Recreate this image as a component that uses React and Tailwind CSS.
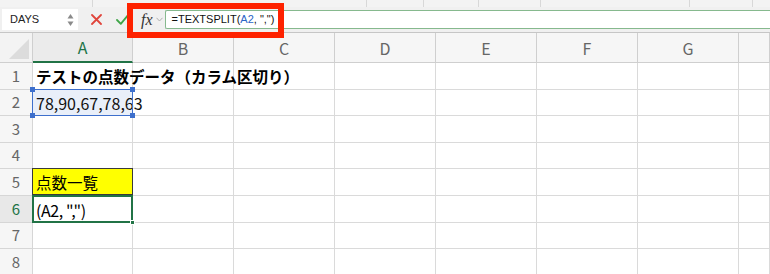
import React from "react";

const font = { fontFamily: '"Noto Sans CJK JP", "Noto Sans", sans-serif' };

const cols = ["A", "B", "C", "D", "E", "F", "G", ""];
const rows = [1, 2, 3, 4, 5, 6, 7, 8];

const Cell = ({ r, c }) => {
  const base = "h-[26.6px] border-r border-b border-[#dadada] flex items-center";
  if (c === "A" && r === 1)
    return (
      <div className={base}>
        <span className="relative z-10 pl-[3px] whitespace-nowrap text-[15.5px] font-bold text-black pt-[1px]">
          テストの点数データ（カラム区切り）
        </span>
      </div>
    );
  if (c === "A" && r === 2)
    return (
      <div className={`${base} relative bg-[#e9eff9]`}>
        <span className="relative z-10 pl-[3px] whitespace-nowrap text-[16px] text-[#111] pt-[2px]">78,90,67,78,63</span>
        <div className="absolute inset-[-1px] z-20 border-[1.5px] border-[#3d6fcc]" />
        <div className="absolute left-[-3px] top-[-3px] z-20 h-[5px] w-[5px] bg-[#3d6fcc]" />
        <div className="absolute right-[-3px] top-[-3px] z-20 h-[5px] w-[5px] bg-[#3d6fcc]" />
        <div className="absolute left-[-3px] bottom-[-3px] z-20 h-[5px] w-[5px] bg-[#3d6fcc]" />
        <div className="absolute right-[-3px] bottom-[-3px] z-20 h-[5px] w-[5px] bg-[#3d6fcc]" />
      </div>
    );
  if (c === "A" && r === 5)
    return (
      <div className={`${base} bg-[#ffff00] !border-[#3a3a3a] border-l border-t ml-[-1px] mt-[-1px]`}>
        <span className="pl-[3px] whitespace-nowrap text-[15.5px] text-black pt-[2px]">点数一覧</span>
      </div>
    );
  if (c === "A" && r === 6)
    return (
      <div className={`${base} relative`}>
        <div className="absolute inset-[-1px] border-2 border-[#217346]" />
        <span className="pl-[3px] whitespace-nowrap text-[16px] tracking-[-0.4px] text-black pt-[2px]">(A2, ",")</span>
        <div className="absolute right-[-3px] bottom-[-3px] h-[5px] w-[5px] bg-[#217346] border border-white" />
      </div>
    );
  return <div className={`${base} bg-white`} />;
};

export default function App() {
  return (
    <div className="relative h-[274px] w-[770px] overflow-hidden bg-white" style={font}>
      {/* ribbon remnant */}
      <div className="flex h-[7px] bg-[#f3f3f3]">
        <div className="w-[93px] border-r border-[#d8d8d8]" />
        <div className="w-[274px] border-r border-[#d8d8d8]" />
        <div className="w-[57px] border-r border-[#d8d8d8]" />
        <div className="w-[55px] border-r border-[#d8d8d8]" />
        <div className="w-[62px] border-r border-[#d8d8d8]" />
        <div className="w-[149px] border-r border-[#d8d8d8]" />
        <div className="w-[63px] border-r border-[#d8d8d8]" />
      </div>

      {/* formula bar */}
      <div className="flex h-[26px] items-center bg-[#f0f0f0] border-b border-[#c6c6c6]">
        <div className="ml-[2px] flex h-[21px] w-[76px] items-center justify-between bg-white pl-[8px] pr-[4px]">
          <span className="text-[11px] text-[#222]" style={{ fontFamily: '"Liberation Sans", sans-serif' }}>DAYS</span>
          <svg width="7" height="14" viewBox="0 0 7 14">
            <path d="M3.5 1 L6.5 5.5 H0.5 Z" fill="#8a8a8a" />
            <path d="M3.5 13 L6.5 8.5 H0.5 Z" fill="#8a8a8a" />
          </svg>
        </div>
        <svg className="ml-[13px]" width="11" height="11" viewBox="0 0 11 11">
          <path d="M1 1 L10 10 M10 1 L1 10" stroke="#e0453c" strokeWidth="1.8" strokeLinecap="round" />
        </svg>
        <svg className="ml-[14px]" width="13" height="11" viewBox="0 0 13 11">
          <path d="M1 6 L4.8 9.8 L12 1.2" stroke="#3fa548" strokeWidth="1.8" fill="none" strokeLinecap="round" strokeLinejoin="round" />
        </svg>
        <span className="ml-[12px] text-[16px] italic text-[#333]" style={{ fontFamily: '"Liberation Serif", serif' }}>
          fx
        </span>
        <svg className="ml-[3px]" width="7" height="5" viewBox="0 0 7 5">
          <path d="M0.5 0.8 L3.5 4 L6.5 0.8" stroke="#b0b0b0" strokeWidth="1" fill="none" />
        </svg>
        <div className="ml-[2px] flex h-[19px] flex-1 items-center rounded-l-[2px] border-y border-l border-[#86b98e] bg-white pl-[6px]">
          <span className="text-[11px] text-[#111]" style={{ fontFamily: '"Liberation Sans", sans-serif' }}>
            =TEXTSPLIT(<span className="text-[#2a64c6]">A2</span>, ",")
          </span>
        </div>
      </div>

      {/* grid */}
      <div className="grid grid-cols-[33px_100px_101px_101px_101px_101px_101px_101px_1fr]">
        <div className="relative h-[30px] border-r border-b border-[#cfcfcf] bg-[#f3f3f3]">
          <svg className="absolute bottom-[3px] right-[3px]" width="20" height="20" viewBox="0 0 20 20">
            <path d="M20 0 V20 H0 Z" fill="#dcdcdc" />
          </svg>
        </div>
        {cols.map((c) => (
          <div
            key={c || "h"}
            className={`flex h-[30px] items-center justify-center border-r border-b border-[#cfcfcf] text-[16px] ${
              c === "A" ? "bg-[#ebebeb] text-[#217346] !border-b-2 !border-b-[#217346]" : "bg-[#f6f6f6] text-[#666]"
            }`}
          >
            {c}
          </div>
        ))}
        {rows.map((r) => (
          <React.Fragment key={r}>
            <div
              className={`flex h-[26.6px] items-center justify-center border-r border-b border-[#d6d6d6] text-[15px] ${
                r === 6 ? "bg-[#e8e8e8] text-[#217346]" : "bg-[#f6f6f6] text-[#666]"
              }`}
            >
              {r}
            </div>
            {cols.map((c) => (
              <Cell key={c || "x"} r={r} c={c} />
            ))}
          </React.Fragment>
        ))}
      </div>

      {/* highlight annotation */}
      <div className="absolute left-[127px] top-[3px] h-[35px] w-[157px] border-[6px] border-[#fe2200]" />
    </div>
  );
}
